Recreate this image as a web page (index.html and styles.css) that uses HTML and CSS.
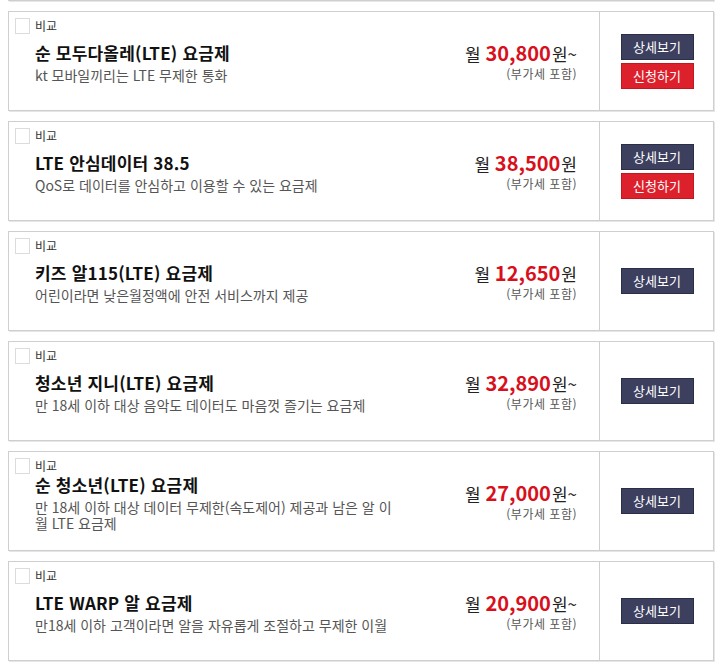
FILE: index.html
```html
<!DOCTYPE html>
<html lang="ko">
<head>
<meta charset="utf-8">
<title>요금제</title>
<link rel="stylesheet" href="styles.css">
</head>
<body>
<ul class="plans">
  <li class="plan plan-prev">
    <div class="info"></div>
    <div class="price"></div>
    <div class="actions"></div>
  </li>
  <li class="plan">
    <div class="info">
      <label class="compare"><span class="box"></span>비교</label>
      <div class="body">
        <h3 class="title">순 모두다올레(LTE) 요금제</h3>
        <p class="desc">kt 모바일끼리는 LTE 무제한 통화</p>
      </div>
    </div>
    <div class="price">
      <div class="amount"><span class="m">월</span> <strong>30,800</strong><span class="won">원~</span></div>
      <div class="vat">(부가세 포함)</div>
    </div>
    <div class="actions">
      <a class="btn btn-dark">상세보기</a>
      <a class="btn btn-red">신청하기</a>
    </div>
  </li>
  <li class="plan">
    <div class="info">
      <label class="compare"><span class="box"></span>비교</label>
      <div class="body">
        <h3 class="title">LTE 안심데이터 38.5</h3>
        <p class="desc">QoS로 데이터를 안심하고 이용할 수 있는 요금제</p>
      </div>
    </div>
    <div class="price">
      <div class="amount"><span class="m">월</span> <strong>38,500</strong><span class="won">원</span></div>
      <div class="vat">(부가세 포함)</div>
    </div>
    <div class="actions">
      <a class="btn btn-dark">상세보기</a>
      <a class="btn btn-red">신청하기</a>
    </div>
  </li>
  <li class="plan">
    <div class="info">
      <label class="compare"><span class="box"></span>비교</label>
      <div class="body">
        <h3 class="title">키즈 알115(LTE) 요금제</h3>
        <p class="desc">어린이라면 낮은월정액에 안전 서비스까지 제공</p>
      </div>
    </div>
    <div class="price">
      <div class="amount"><span class="m">월</span> <strong>12,650</strong><span class="won">원</span></div>
      <div class="vat">(부가세 포함)</div>
    </div>
    <div class="actions">
      <a class="btn btn-dark">상세보기</a>
    </div>
  </li>
  <li class="plan">
    <div class="info">
      <label class="compare"><span class="box"></span>비교</label>
      <div class="body">
        <h3 class="title">청소년 지니(LTE) 요금제</h3>
        <p class="desc">만 18세 이하 대상 음악도 데이터도 마음껏 즐기는 요금제</p>
      </div>
    </div>
    <div class="price">
      <div class="amount"><span class="m">월</span> <strong>32,890</strong><span class="won">원~</span></div>
      <div class="vat">(부가세 포함)</div>
    </div>
    <div class="actions">
      <a class="btn btn-dark">상세보기</a>
    </div>
  </li>
  <li class="plan">
    <div class="info">
      <label class="compare"><span class="box"></span>비교</label>
      <div class="body">
        <h3 class="title">순 청소년(LTE) 요금제</h3>
        <p class="desc">만 18세 이하 대상 데이터 무제한(속도제어) 제공과 남은 알 이월 LTE 요금제</p>
      </div>
    </div>
    <div class="price">
      <div class="amount"><span class="m">월</span> <strong>27,000</strong><span class="won">원~</span></div>
      <div class="vat">(부가세 포함)</div>
    </div>
    <div class="actions">
      <a class="btn btn-dark">상세보기</a>
    </div>
  </li>
  <li class="plan">
    <div class="info">
      <label class="compare"><span class="box"></span>비교</label>
      <div class="body">
        <h3 class="title">LTE WARP 알 요금제</h3>
        <p class="desc">만18세 이하 고객이라면 알을 자유롭게 조절하고 무제한 이월</p>
      </div>
    </div>
    <div class="price">
      <div class="amount"><span class="m">월</span> <strong>20,900</strong><span class="won">원~</span></div>
      <div class="vat">(부가세 포함)</div>
    </div>
    <div class="actions">
      <a class="btn btn-dark">상세보기</a>
    </div>
  </li>
</ul>
</body>
</html>
```
FILE: styles.css
```css
* { box-sizing: border-box; }
html, body {
  margin: 0;
  padding: 0;
  background: #fff;
  font-family: "Noto Sans CJK KR", "Noto Sans", sans-serif;
  color: #222;
}
.plans {
  list-style: none;
  margin: -99px 6px 0 8px;
  padding: 0;
}
.plan {
  display: flex;
  height: 100px;
  margin-bottom: 10px;
  border: 1px solid #cfcfcf;
  box-shadow: 1px 1px 0 #e6e6e6;
  background: #fff;
}
.info {
  flex: 1;
  display: flex;
  flex-direction: column;
  padding: 5px 0 18px 6px;
  min-width: 0;
}
.compare {
  display: flex;
  align-items: center;
  height: 17px;
  font-size: 12px;
  line-height: 17px;
  color: #333;
}
.box {
  width: 15px;
  height: 16px;
  border: 1px solid #dcdcdc;
  background: #fff;
  margin-right: 5px;
}
.body {
  flex: 1;
  display: flex;
  flex-direction: column;
  justify-content: center;
  padding-left: 20px;
}
.title {
  margin: 0 0 4px;
  font-size: 17px;
  font-weight: bold;
  line-height: 20px;
  letter-spacing: 0.2px;
  color: #111;
}
.desc {
  margin: 0;
  width: 362px;
  font-size: 14px;
  line-height: 16px;
  word-break: break-all;
  color: #555;
}
.price {
  display: flex;
  flex-direction: column;
  justify-content: center;
  align-items: flex-end;
  padding: 0 22px 0 0;
}
.amount {
  font-size: 17px;
  line-height: 24px;
  color: #222;
  white-space: nowrap;
}
.amount strong {
  font-size: 20px;
  font-weight: bold;
  color: #d7101c;
}
.won { margin-left: 1px; }
.vat {
  font-size: 12px;
  line-height: 15px;
  letter-spacing: 0.5px;
  color: #555;
}
.actions {
  width: 114px;
  border-left: 1px solid #cfcfcf;
  display: flex;
  flex-direction: column;
  align-items: center;
  justify-content: center;
  gap: 3px;
  padding-left: 1px;
}
.btn {
  display: block;
  width: 73px;
  height: 26px;
  font-size: 13px;
  line-height: 24px;
  text-align: center;
  color: #fff;
  text-decoration: none;
}
.btn-dark {
  background: #3c405e;
  border: 1px solid #2b2e47;
}
.btn-red {
  background: #dd212c;
  border: 1px solid #c71520;
}
```
